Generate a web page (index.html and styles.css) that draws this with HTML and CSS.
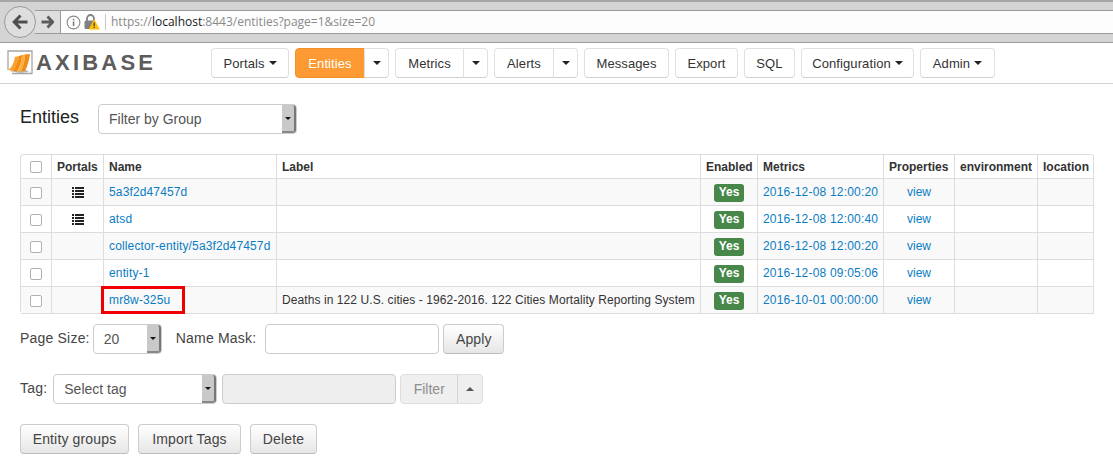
FILE: index.html
```html
<!DOCTYPE html>
<html lang="en">
<head>
    <meta charset="UTF-8">
    <meta name="viewport" content="width=device-width, initial-scale=1.0">
    <title>Entities</title>
    <link rel="stylesheet" href="styles.css">
</head>
<body>
<div class="browser">
    <div class="back">
        <svg width="16" height="16" viewBox="0 0 16 16"><path d="M8.5 1.5 L2.2 8 L8.5 14.5 M3 8 H15.5" fill="none" stroke="#4f4f4f" stroke-width="3"/></svg>
    </div>
    <div class="forward">
        <svg width="13" height="14" viewBox="0 0 13 14"><path d="M6.5 1.5 L11.8 7 L6.5 12.5 M11 7 H0.5" fill="none" stroke="#5c5c5c" stroke-width="2.8"/></svg>
    </div>
    <div class="urlbar">
        <svg class="info" width="15" height="15" viewBox="0 0 15 15"><circle cx="7.5" cy="7.5" r="6.4" fill="none" stroke="#8a8a8a" stroke-width="1.1"/><rect x="6.8" y="6.5" width="1.5" height="4.5" fill="#777"/><rect x="6.8" y="3.8" width="1.5" height="1.6" fill="#777"/></svg>
        <svg class="lock" width="16" height="16" viewBox="0 0 16 16"><path d="M3 7 V4.5 a3.5 3.5 0 0 1 7 0 V7" fill="none" stroke="#808080" stroke-width="1.8"/><rect x="0.5" y="6.5" width="10.5" height="8.5" rx="1.5" fill="#808080"/><path d="M10.2 5 L15.8 15.5 H4.6 Z" fill="#fdc000"/><rect x="9.6" y="8.5" width="1.2" height="3.6" fill="#333"/><rect x="9.6" y="12.8" width="1.2" height="1.3" fill="#333"/></svg>
        <span class="url">https://<b>localhost</b>:8443/entities?page=1&amp;size=20</span>
    </div>
</div>

<nav class="topnav">
    <a class="logo" href="#">
        <svg width="26" height="25" viewBox="0 0 26 25">
            <path d="M1 20 V1 H25 V23.5 H5" fill="#fff" stroke="#a5a5a5" stroke-width="1.3"/>
            <path d="M2 21 L13 23 L22 22 L19 20 Z" fill="#b5b5b5"/>
            <path d="M1 20 C5 18 7 12 8 7 L12 6 C11 12 9 18 6 21 Z" fill="#f9a12e"/>
            <path d="M6 21 C9 17 11 11 12 6 L15 5 C15 11 13 17 10 21.5 Z" fill="#f58a12"/>
            <path d="M10 21.5 C13 17 15 11 15 5 L18 4.5 C18 11 16 17 14 21.5 Z" fill="#fbb03f"/>
            <path d="M14 21.5 C16 17 18 11 18 4.5 L23 4 C22 11 20 17 18 21 Z" fill="#f28a16"/>
        </svg>
        <span>AXIBASE</span>
    </a>
    <div class="menu">
        <a class="btn w-portals" href="#">Portals <i class="caret"></i></a>
        <div class="group">
            <a class="btn active w-entities" href="#">Entities</a><a class="btn split" href="#"><i class="caret"></i></a>
        </div>
        <div class="group">
            <a class="btn w-metrics" href="#">Metrics</a><a class="btn split" href="#"><i class="caret"></i></a>
        </div>
        <div class="group">
            <a class="btn w-alerts" href="#">Alerts</a><a class="btn split" href="#"><i class="caret"></i></a>
        </div>
        <a class="btn w-messages" href="#">Messages</a>
        <a class="btn w-export" href="#">Export</a>
        <a class="btn w-sql" href="#">SQL</a>
        <a class="btn w-config" href="#">Configuration <i class="caret"></i></a>
        <a class="btn w-admin" href="#">Admin <i class="caret"></i></a>
    </div>
</nav>

<main class="content">
    <div class="title-row">
        <h1>Entities</h1>
        <div class="select group-select"><span>Filter by Group</span><i class="arrow"></i></div>
    </div>

    <table class="entities">
        <colgroup>
            <col class="c-check"><col class="c-portals"><col class="c-name"><col class="c-label">
            <col class="c-enabled"><col class="c-metrics"><col class="c-props"><col class="c-env"><col class="c-loc">
        </colgroup>
        <thead>
            <tr>
                <th class="center"><span class="check"></span></th>
                <th>Portals</th><th>Name</th><th>Label</th><th>Enabled</th><th>Metrics</th><th>Properties</th><th>environment</th><th>location</th>
            </tr>
        </thead>
        <tbody>
            <tr>
                <td class="center"><span class="check"></span></td>
                <td class="center"><svg class="list-icon" width="12" height="11" viewBox="0 0 12 11"><path d="M0 0h2v2H0zM3 0h9v2H3zM0 3h2v2H0zM3 3h9v2H3zM0 6h2v2H0zM3 6h9v2H3zM0 9h2v2H0zM3 9h9v2H3z" fill="#222"/></svg></td>
                <td><a class="name" href="#">5a3f2d47457d</a></td>
                <td></td>
                <td class="center"><span class="badge">Yes</span></td>
                <td><a class="date" href="#">2016-12-08 12:00:20</a></td>
                <td class="center"><a href="#">view</a></td>
                <td></td><td></td>
            </tr>
            <tr>
                <td class="center"><span class="check"></span></td>
                <td class="center"><svg class="list-icon" width="12" height="11" viewBox="0 0 12 11"><path d="M0 0h2v2H0zM3 0h9v2H3zM0 3h2v2H0zM3 3h9v2H3zM0 6h2v2H0zM3 6h9v2H3zM0 9h2v2H0zM3 9h9v2H3z" fill="#222"/></svg></td>
                <td><a class="name" href="#">atsd</a></td>
                <td></td>
                <td class="center"><span class="badge">Yes</span></td>
                <td><a class="date" href="#">2016-12-08 12:00:40</a></td>
                <td class="center"><a href="#">view</a></td>
                <td></td><td></td>
            </tr>
            <tr>
                <td class="center"><span class="check"></span></td>
                <td></td>
                <td><a class="name" href="#">collector-entity/5a3f2d47457d</a></td>
                <td></td>
                <td class="center"><span class="badge">Yes</span></td>
                <td><a class="date" href="#">2016-12-08 12:00:20</a></td>
                <td class="center"><a href="#">view</a></td>
                <td></td><td></td>
            </tr>
            <tr>
                <td class="center"><span class="check"></span></td>
                <td></td>
                <td><a class="name" href="#">entity-1</a></td>
                <td></td>
                <td class="center"><span class="badge">Yes</span></td>
                <td><a class="date" href="#">2016-12-08 09:05:06</a></td>
                <td class="center"><a href="#">view</a></td>
                <td></td><td></td>
            </tr>
            <tr>
                <td class="center"><span class="check"></span></td>
                <td></td>
                <td class="marked"><a class="name" href="#">mr8w-325u</a><span class="highlight"></span></td>
                <td><span class="label-text">Deaths in 122 U.S. cities - 1962-2016. 122 Cities Mortality Reporting System</span></td>
                <td class="center"><span class="badge">Yes</span></td>
                <td><a class="date" href="#">2016-10-01 00:00:00</a></td>
                <td class="center"><a href="#">view</a></td>
                <td></td><td></td>
            </tr>
        </tbody>
    </table>

    <div class="form-row page-row">
        <label>Page Size:</label>
        <div class="select size-select"><span>20</span><i class="arrow"></i></div>
        <label class="mask-label">Name Mask:</label>
        <input class="mask-input" type="text">
        <button class="gray-btn apply" type="button">Apply</button>
    </div>

    <div class="form-row tag-row">
        <label>Tag:</label>
        <div class="select tag-select"><span>Select tag</span><i class="arrow"></i></div>
        <input class="tag-input" type="text" disabled>
        <div class="filter-group">
            <span class="filter">Filter</span><span class="filter-toggle"><i class="caret up"></i></span>
        </div>
    </div>

    <div class="actions">
        <button class="gray-btn w-groups" type="button">Entity groups</button>
        <button class="gray-btn w-import" type="button">Import Tags</button>
        <button class="gray-btn w-delete" type="button">Delete</button>
    </div>
</main>
</body>
</html>
```

FILE: styles.css
```css
* {
    box-sizing: border-box;
}
html, body {
    height: 470px;
    overflow: hidden;
}
body {
    margin: 0;
    background-color: #fff;
    font-family: "Liberation Sans", Arial, sans-serif;
    font-size: 13px;
    color: #333;
}

/* browser toolbar */
.browser {
    height: 43px;
    padding-top: 8px;
    padding-left: 4px;
    display: flex;
    align-items: flex-start;
    background-color: #d4d4d4;
    border-top: 2px solid #a6a6a6;
    border-bottom: 1px solid #9e9e9e;
}
.back {
    width: 32px;
    height: 32px;
    margin-top: -4px;
    border-radius: 50%;
    border: 1px solid #9a9a9a;
    background-color: #dedede;
    display: flex;
    align-items: center;
    justify-content: center;
    position: relative;
    z-index: 1;
}
.forward {
    width: 25px;
    height: 24px;
    margin-left: -1px;
    background-color: #dedede;
    border-top: 1px solid #9a9a9a;
    border-bottom: 1px solid #9a9a9a;
    display: flex;
    align-items: center;
    justify-content: center;
}
.urlbar {
    flex: 1;
    height: 24px;
    display: flex;
    align-items: center;
    padding-left: 5px;
    background-color: #fdfdfd;
    border-top: 1px solid #9a9a9a;
    border-bottom: 1px solid #9a9a9a;
    border-left: 1px solid #9a9a9a;
    font-family: "Open Sans", "Liberation Sans", sans-serif;
    font-size: 12px;
    color: #8a8a8a;
}
.info {
    margin-right: 3px;
}
.lock {
    margin-right: 5px;
}
.url {
    padding-left: 5px;
    border-left: 1px solid #c8c8c8;
    line-height: 16px;
}
.url b {
    font-weight: normal;
    color: #1a1a1a;
}

/* top nav */
.topnav {
    height: 41px;
    display: flex;
    align-items: flex-start;
    padding: 5px 0 0 7px;
    border-bottom: 1px solid #d5d5d5;
}
.logo {
    width: 204px;
    display: flex;
    align-items: center;
    height: 29px;
    text-decoration: none;
}
.logo svg {
    margin-right: 3px;
}
.logo span {
    font-size: 22px;
    font-weight: bold;
    letter-spacing: 3.2px;
    color: #5c5c5c;
}
.menu {
    display: flex;
    gap: 6px;
}
.group {
    display: flex;
}
.btn {
    height: 30px;
    display: flex;
    align-items: center;
    justify-content: center;
    gap: 4px;
    background-color: #fff;
    border: 1px solid #e0e0e0;
    border-bottom-color: #cfcfcf;
    border-radius: 4px;
    color: #333;
    font-size: 13px;
    letter-spacing: 0.1px;
    text-decoration: none;
    white-space: nowrap;
}
.w-portals { width: 78px; }
.w-entities { width: 70px; }
.w-metrics { width: 69px; }
.w-alerts { width: 60px; }
.w-messages { width: 85px; }
.w-export { width: 63px; }
.w-sql { width: 51px; }
.w-config { width: 113px; }
.w-admin { width: 75px; }
.group .btn:first-child {
    border-radius: 4px 0 0 4px;
}
.btn.split {
    width: 25px;
    margin-left: -1px;
    border-radius: 0 4px 4px 0;
}
.btn.active {
    background-color: #fd9a33;
    border-color: #f0912c;
    color: #fff;
}
.caret {
    display: inline-block;
    width: 0;
    height: 0;
    border-left: 4px solid transparent;
    border-right: 4px solid transparent;
    border-top: 4px solid #222;
}
.caret.up {
    border-top: 0;
    border-bottom: 4px solid #555;
}

/* page */
.content {
    padding: 20px 19px 0 20px;
}
.title-row {
    display: flex;
    align-items: flex-start;
    height: 50px;
}
h1 {
    margin: 0;
    width: 78px;
    font-size: 18px;
    font-weight: normal;
    line-height: 26px;
    color: #222;
}
.select {
    height: 30px;
    display: flex;
    align-items: center;
    justify-content: space-between;
    padding-left: 10px;
    border: 1px solid #ccc;
    border-radius: 4px;
    background-color: #fff;
    font-size: 14px;
    color: #555;
}
.group-select {
    width: 199px;
}
.arrow {
    width: 14px;
    height: 28px;
    flex: none;
    background-color: #c9c9c9;
    border-right: 2px solid #777;
    border-bottom: 2px solid #888;
    border-top-right-radius: 3px;
    border-bottom-right-radius: 3px;
    position: relative;
}
.arrow::after {
    content: "";
    position: absolute;
    left: 3px;
    top: 12px;
    border-left: 3px solid transparent;
    border-right: 3px solid transparent;
    border-top: 3px solid #111;
}

/* table */
.entities {
    width: 1074px;
    table-layout: fixed;
    border-collapse: separate;
    border-spacing: 0;
    border-top: 1px solid #ddd;
    border-left: 1px solid #ddd;
    border-radius: 4px;
    font-size: 12px;
}
.c-check { width: 31px; }
.c-portals { width: 52px; }
.c-name { width: 173px; }
.c-label { width: 424px; }
.c-enabled { width: 57px; }
.c-metrics { width: 126px; }
.c-props { width: 71px; }
.c-env { width: 83px; }
.c-loc { width: 56px; }
.entities th,
.entities td {
    padding: 0 5px;
    border-right: 1px solid #ddd;
    border-bottom: 1px solid #ddd;
    white-space: nowrap;
    overflow: hidden;
    text-align: left;
}
.entities th {
    height: 24px;
    font-weight: bold;
    color: #333;
}
.entities td {
    height: 27px;
}
.entities tbody tr:nth-child(odd) td {
    background-color: #f9f9f9;
}
.entities .center {
    text-align: center;
}
.entities a {
    display: inline-block;
    margin-bottom: 1px;
    color: #0a7cc4;
    text-decoration: none;
}
.entities a.name {
    letter-spacing: 0.14px;
}
.entities a.date {
    letter-spacing: 0.2px;
}
.label-text {
    display: inline-block;
    margin-bottom: 1px;
    letter-spacing: 0.08px;
}
.entities td.marked {
    position: relative;
    overflow: visible;
}
.highlight {
    position: absolute;
    left: -3px;
    top: -1px;
    width: 84px;
    height: 28px;
    border: 3px solid #f00000;
}
.check {
    display: inline-block;
    width: 12px;
    height: 12px;
    vertical-align: middle;
    border: 1px solid #b0b0b0;
    border-radius: 2px;
    background-color: #fff;
}
.list-icon {
    display: inline-block;
    vertical-align: middle;
    margin-bottom: 1px;
}
.badge {
    display: inline-block;
    width: 30px;
    height: 18px;
    margin-top: 2px;
    line-height: 17px;
    border-radius: 3px;
    background-color: #47874a;
    color: #fff;
    font-weight: bold;
    font-size: 12px;
    text-align: center;
    vertical-align: middle;
}

/* filter rows */
.form-row {
    display: flex;
    align-items: center;
    font-size: 14px;
    color: #444;
}
.form-row label {
    margin-bottom: 2px;
    letter-spacing: 0.2px;
    white-space: nowrap;
}
.page-row {
    margin-top: 10px;
    height: 30px;
}
.size-select {
    width: 69px;
    margin-left: 3px;
}
.mask-label {
    margin-left: 14px;
}
.mask-input {
    width: 174px;
    height: 30px;
    margin-left: 9px;
    border: 1px solid #ccc;
    border-radius: 4px;
    background-color: #fff;
}
.apply {
    margin-left: 4px;
    width: 61px;
}
.gray-btn {
    height: 30px;
    padding: 0;
    border: 1px solid #ccc;
    border-bottom-color: #bbb;
    border-radius: 4px;
    background: linear-gradient(to bottom, #fff, #e6e6e6);
    font-family: inherit;
    font-size: 14px;
    letter-spacing: 0.15px;
    color: #444;
}
.w-groups { width: 109px; }
.w-import { width: 103px; }
.w-delete { width: 67px; }
.tag-row {
    margin-top: 20px;
    height: 30px;
}
.tag-select {
    width: 164px;
    margin-left: 6px;
}
.tag-input {
    width: 174px;
    height: 30px;
    margin-left: 5px;
    border: 1px solid #ccc;
    border-radius: 4px;
    background-color: #eee;
}
.filter-group {
    display: flex;
    height: 30px;
    margin-left: 4px;
    border: 1px solid #ddd;
    border-radius: 4px;
    background-color: #efefef;
    color: #8e8e8e;
}
.filter {
    width: 57px;
    line-height: 28px;
    text-align: center;
    border-right: 1px solid #d5d5d5;
}
.filter-toggle {
    width: 24px;
    display: flex;
    align-items: center;
    justify-content: center;
}
.actions {
    margin-top: 20px;
    display: flex;
    gap: 9px;
}
```
